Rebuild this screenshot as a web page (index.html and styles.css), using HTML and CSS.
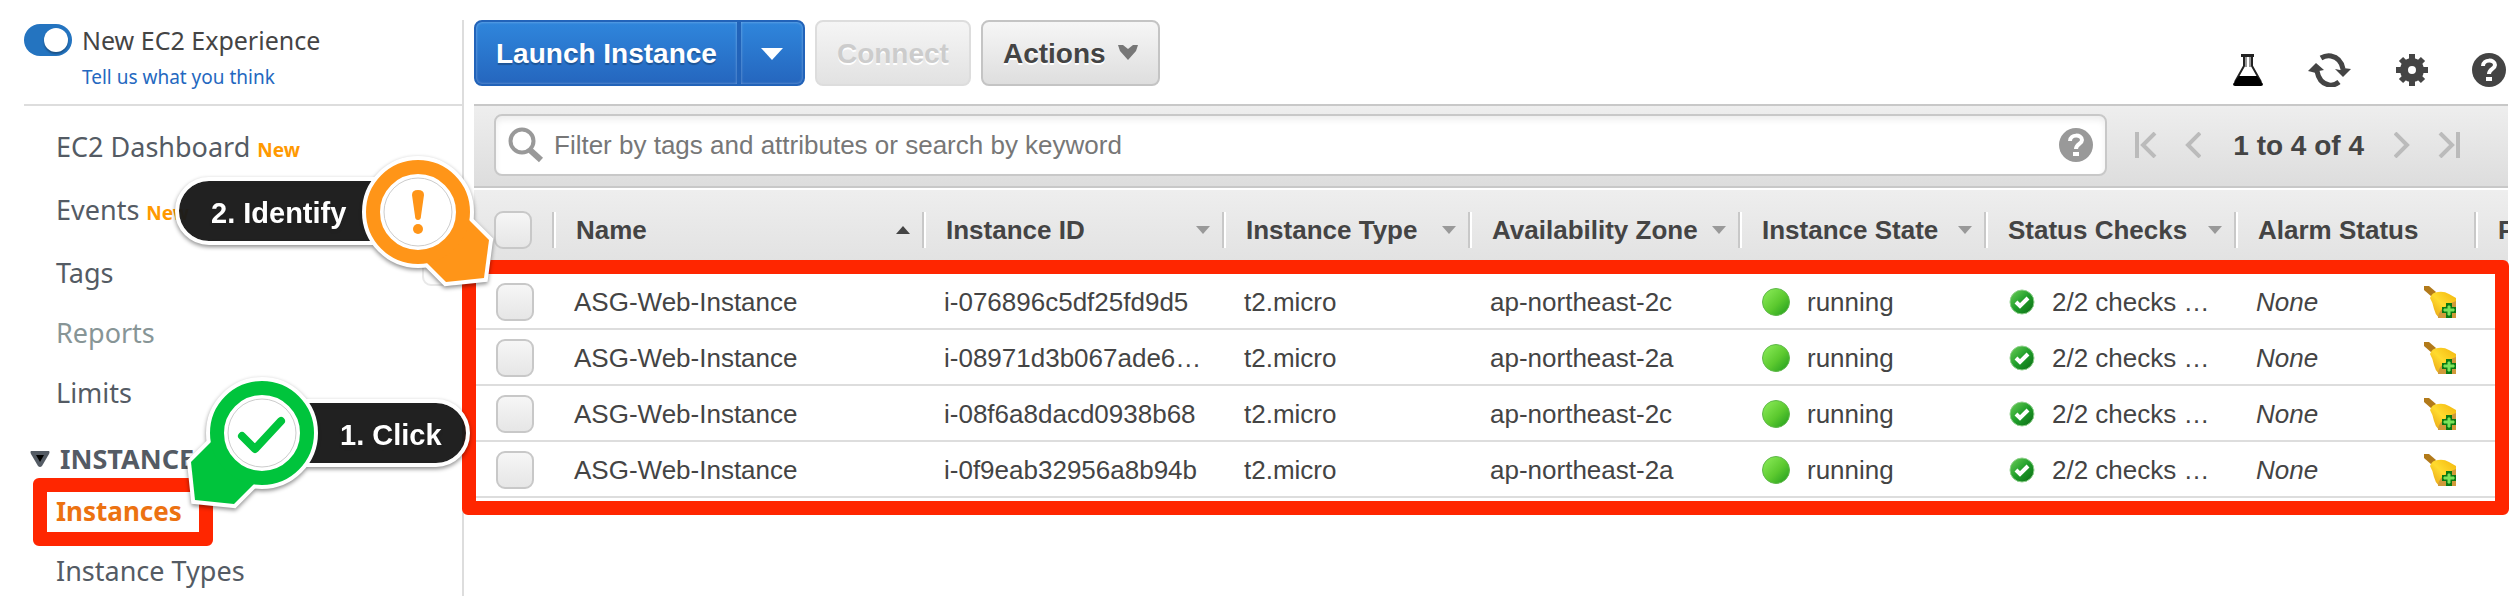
FILE: index.html
```html
<!DOCTYPE html>
<html lang="en">
<head>
<meta charset="utf-8">
<title>EC2 Instances</title>
<link rel="stylesheet" href="styles.css">
</head>
<body>
<svg class="defs" aria-hidden="true">
  <defs>
    <linearGradient id="g-run" x1="0" y1="0" x2="1" y2="1"><stop offset="0" stop-color="#8fef5c"/><stop offset=".55" stop-color="#5cc92f"/><stop offset="1" stop-color="#1c9a1c"/></linearGradient>
    <linearGradient id="g-ok" x1="0" y1="0" x2="1" y2="1"><stop offset="0" stop-color="#6fd05a"/><stop offset=".5" stop-color="#1f9e2a"/><stop offset="1" stop-color="#0b6a14"/></linearGradient>
    <linearGradient id="g-bell" x1="0" y1="1" x2="1" y2="0"><stop offset="0" stop-color="#e59a10"/><stop offset=".5" stop-color="#ffdb2e"/><stop offset="1" stop-color="#f2b50c"/></linearGradient>
  </defs>
  <symbol id="i-run" viewBox="0 0 28 28"><circle cx="14" cy="14" r="13.5" fill="url(#g-run)" stroke="#5fb84a"/></symbol>
  <symbol id="i-ok" viewBox="0 0 26 26"><circle cx="13" cy="13" r="12" fill="url(#g-ok)" stroke="#8fd08c" stroke-width="1"/><path d="M7 13l4 4 8-8" fill="none" stroke="#fff" stroke-width="4"/></symbol>
  <symbol id="i-bell" viewBox="0 0 32 32"><path d="M0 0h5l7 6-4 5-8-7z" fill="#b27a1a"/><path d="M6 12q2-6 8-6 6-1 11 2l7 4v10L20 32h-5q-4-4-5-9-1-6-4-11z" fill="url(#g-bell)"/><path d="M14 32q0-10 18-17v17z" fill="#d09a3a"/><path d="M22 17h6v4h4v6h-4v5h-6v-5h-4v-6h4z" fill="#0a7a12"/><path d="M24 20h2v3h4v2h-4v4h-2v-4h-4v-2h4z" fill="#7be35a" stroke="#7be35a"/></symbol>
  <symbol id="i-help" viewBox="0 0 34 34"><circle cx="17" cy="17" r="17" fill="currentColor"/><path d="M11 13c0-7 12-7 12-1 0 4-6 4-6 9" fill="none" stroke="#fff" stroke-width="4"/><path d="M14 24h6v4h-6z" fill="#fff"/></symbol>
</svg>

<div class="app">
  <aside class="sidebar">
    <div class="experience">
      <input class="switch" type="checkbox" id="exp" checked>
      <label for="exp">New EC2 Experience</label>
      <a class="feedback" href="#">Tell us what you think</a>
    </div>
    <nav class="nav">
      <a href="#">EC2 Dashboard <b>New</b></a>
      <a href="#">Events <b>New</b></a>
      <a href="#">Tags</a>
      <a href="#" class="muted">Reports</a>
      <a href="#">Limits</a>
      <h2><svg viewBox="0 0 20 16"><path d="M1 0h18q1 1 0 3l-7 12q-2 2-4 0l-7-12q-1-2 0-3z" fill="#545b64"/><path d="M6 4h8l-4 7z" fill="#000"/></svg>INSTANCES</h2>
      <a href="#" class="current">Instances</a>
      <a href="#">Instance Types</a>
    </nav>
    <div class="frame frame-nav"></div>
  </aside>

  <main class="main">
    <div class="toolbar">
      <div class="split">
        <button class="btn primary">Launch Instance</button>
        <button class="btn primary more" aria-label="More launch options"><svg width="22" height="12" viewBox="0 0 22 12"><path d="M0 0h22l-11 12z" fill="#fff"/></svg></button>
      </div>
      <button class="btn" disabled>Connect</button>
      <button class="btn">Actions <svg width="20" height="18" viewBox="0 0 20 18"><path d="M0 0h5l5 4 5-4h5l-2 6-8 9-8-9z" fill="#777"/></svg></button>
      <div class="tools">
        <button class="icon" aria-label="Labs"><svg width="32" height="34" viewBox="0 0 32 34"><path d="M12 4v9L3 29M20 4v9l9 16" fill="none" stroke="#222" stroke-width="2"/><path d="M14 4v10M18 4v10" stroke="#999" stroke-width="2"/><path d="M9 1h13v3H9z" fill="#222"/><path d="M7 23h18l6 8q0 2-2 2H3q-2 0-2-2z" fill="#000"/></svg></button>
        <button class="icon" aria-label="Refresh"><svg width="44" height="34" viewBox="0 0 44 34"><path d="M13 5q5-3 10-2 10 2 12 13M31 29q-5 4-10 3Q11 30 9 18" fill="none" stroke="#444" stroke-width="5"/><path d="M27 16l5 1 3-2 8 1-8 8zM0 18l8-8 8 7-5 1-3 2z" fill="#444"/></svg></button>
        <button class="icon" aria-label="Settings"><svg width="32" height="32" viewBox="0 0 32 32"><circle cx="16" cy="16" r="8" fill="none" stroke="#444" stroke-width="8"/><path d="M16 0v9M16 23v9M0 16h9M23 16h9M5 5l5 5M22 22l5 5M27 5l-5 5M10 22l-5 5" stroke="#444" stroke-width="6"/></svg></button>
        <button class="icon dark" aria-label="Help"><svg width="34" height="34"><use href="#i-help"/></svg></button>
      </div>
    </div>

    <div class="filterbar">
      <div class="search">
        <svg width="36" height="36" viewBox="0 0 36 36"><circle cx="14" cy="14" r="11.500" fill="none" stroke="#999" stroke-width="4"/><path d="M22 23l11 10" stroke="#999" stroke-width="6"/></svg>
        <input type="text" aria-label="Filter" placeholder="Filter by tags and attributes or search by keyword">
        <button class="icon" aria-label="Filter help"><svg width="34" height="34"><use href="#i-help"/></svg></button>
      </div>
      <div class="pager">
        <button class="icon" aria-label="First page"><svg width="22" height="26" viewBox="0 0 22 26"><path d="M2 0v26M20 1L8 13l12 12"/></svg></button>
        <button class="icon" aria-label="Previous page"><svg width="16" height="26" viewBox="0 0 16 26"><path d="M15 1L3 13l12 12"/></svg></button>
        <span>1 to 4 of 4</span>
        <button class="icon" aria-label="Next page"><svg width="16" height="26" viewBox="0 0 16 26"><path d="M1 1l12 12L1 25"/></svg></button>
        <button class="icon" aria-label="Last page"><svg width="22" height="26" viewBox="0 0 22 26"><path d="M20 0v26M2 1l12 12L2 25"/></svg></button>
      </div>
    </div>

    <div class="grid">
      <table>
        <colgroup><col class="c-check"><col class="c-name"><col class="c-id"><col class="c-type"><col class="c-zone"><col class="c-type"><col class="c-status"><col class="c-alarm"><col></colgroup>
        <thead>
          <tr>
            <th><input type="checkbox" aria-label="Select all"></th>
            <th><div class="asc">Name</div></th>
            <th><div class="sort">Instance ID</div></th>
            <th><div class="sort">Instance Type</div></th>
            <th><div class="sort">Availability Zone</div></th>
            <th><div class="sort">Instance State</div></th>
            <th><div class="sort">Status Checks</div></th>
            <th><div>Alarm Status</div></th>
            <th><div>P</div></th>
          </tr>
        </thead>
        <tbody>
          <tr><td><input type="checkbox" aria-label="Select row 1"></td><td>ASG-Web-Instance</td><td>i-076896c5df25fd9d5</td><td>t2.micro</td><td>ap-northeast-2c</td><td><div class="state"><svg width="28" height="28"><use href="#i-run"/></svg>running</div></td><td><div class="state check"><svg width="26" height="26"><use href="#i-ok"/></svg>2/2 checks …</div></td><td><div class="alarm"><i>None</i><svg width="32" height="32"><use href="#i-bell"/></svg></div></td><td></td></tr>
          <tr><td><input type="checkbox" aria-label="Select row 2"></td><td>ASG-Web-Instance</td><td>i-08971d3b067ade6…</td><td>t2.micro</td><td>ap-northeast-2a</td><td><div class="state"><svg width="28" height="28"><use href="#i-run"/></svg>running</div></td><td><div class="state check"><svg width="26" height="26"><use href="#i-ok"/></svg>2/2 checks …</div></td><td><div class="alarm"><i>None</i><svg width="32" height="32"><use href="#i-bell"/></svg></div></td><td></td></tr>
          <tr><td><input type="checkbox" aria-label="Select row 3"></td><td>ASG-Web-Instance</td><td>i-08f6a8dacd0938b68</td><td>t2.micro</td><td>ap-northeast-2c</td><td><div class="state"><svg width="28" height="28"><use href="#i-run"/></svg>running</div></td><td><div class="state check"><svg width="26" height="26"><use href="#i-ok"/></svg>2/2 checks …</div></td><td><div class="alarm"><i>None</i><svg width="32" height="32"><use href="#i-bell"/></svg></div></td><td></td></tr>
          <tr><td><input type="checkbox" aria-label="Select row 4"></td><td>ASG-Web-Instance</td><td>i-0f9eab32956a8b94b</td><td>t2.micro</td><td>ap-northeast-2a</td><td><div class="state"><svg width="28" height="28"><use href="#i-run"/></svg>running</div></td><td><div class="state check"><svg width="26" height="26"><use href="#i-ok"/></svg>2/2 checks …</div></td><td><div class="alarm"><i>None</i><svg width="32" height="32"><use href="#i-bell"/></svg></div></td><td></td></tr>
        </tbody>
      </table>
      <div class="frame frame-rows"></div>
    </div>
  </main>

  <div class="ghost"></div>
  <div class="callout identify">
    <span>2. Identify</span>
    <svg width="140" height="140" viewBox="0 0 140 140">
      <path d="M111 68l20 20-5 38-38 4-22-22" fill="#ff9518" stroke="#fff" stroke-width="8"/>
      <circle cx="60" cy="60" r="45" fill="#fff" stroke="#fff" stroke-width="22"/>
      <path d="M111 68l20 20-5 38-38 4-22-22z" fill="#ff9518"/>
      <circle cx="60" cy="60" r="45" fill="#fff" stroke="#ff9518" stroke-width="14"/>
      <circle cx="60" cy="60" r="34" fill="none" stroke="#ccc"/>
      <path d="M54 43q0-5 6-5t6 5l-3 21q0 4-3 4t-3-4z" fill="#ff9518"/><circle cx="60" cy="77" r="5" fill="#ff9518"/>
    </svg>
  </div>
  <div class="callout click">
    <span>1. Click</span>
    <svg width="140" height="140" viewBox="0 0 140 140">
      <path d="M29 69L9 89l4 38 39 4 22-22" fill="#00c43c" stroke="#fff" stroke-width="8"/>
      <circle cx="80" cy="60" r="45" fill="#fff" stroke="#fff" stroke-width="22"/>
      <path d="M29 69L9 89l4 38 39 4 22-22z" fill="#00c43c"/>
      <circle cx="80" cy="60" r="45" fill="#fff" stroke="#00c43c" stroke-width="14"/>
      <circle cx="80" cy="60" r="34" fill="none" stroke="#ccc"/>
      <path d="M60 63l13 13 26-28" fill="none" stroke="#00c43c" stroke-width="8" stroke-linecap="round" stroke-linejoin="round"/>
    </svg>
  </div>
</div>
</body>
</html>
```
FILE: styles.css
```css
* { box-sizing: border-box; }
body { margin: 0; background: #fff; color: #444; font: 26px/32px "Liberation Sans", Arial, sans-serif; }
svg { display: block; flex: none; }
a { text-decoration: none; }
button, input { font: inherit; color: inherit; margin: 0; }
.defs { position: absolute; width: 0; height: 0; }
.app { position: relative; display: flex; min-height: 100vh; padding: 20px 12px 0 24px; overflow: hidden; }

.sidebar { position: relative; flex: none; width: 440px; border-right: 2px solid #ddd; font-family: "Noto Sans", "Open Sans", sans-serif; }
.experience { display: grid; grid-template-columns: 48px 1fr; column-gap: 10px; align-items: center; align-content: start; row-gap: 5px; height: 86px; padding-top: 4px; border-bottom: 2px solid #ddd; font-size: 25px; }
.switch { appearance: none; display: flex; width: 48px; height: 32px; padding: 4px; border-radius: 16px; background: #2474c0; justify-content: flex-end; }
.switch::before { content: ""; width: 24px; height: 24px; border-radius: 50%; background: #fff; box-shadow: 0 2px 2px rgba(0,0,0,.3); }
.feedback { grid-column: 2; color: #2468c0; font-size: 19px; }
.nav { display: flex; flex-direction: column; padding: 21px 0 0 32px; font-size: 27px; line-height: 40px; gap: 20px; }
.nav a { color: #545b64; }
.nav b { color: #f90; font-size: 19px; }
.nav .muted { color: #879596; }
.nav .current { color: #ec7211; font-size: 26px; font-weight: 700; }
.nav h2 { display: flex; align-items: center; gap: 10px; margin: 6px 0 -8px -26px; font-size: 27px; line-height: 40px; color: #545b64; }
.nav h2 svg { width: 20px; height: 16px; }

.frame { position: absolute; border: 14px solid #ff2600; border-radius: 6px; pointer-events: none; }
.frame-nav { left: 9px; top: 458px; width: 180px; height: 68px; }
.frame-rows { left: -12px; right: -1px; top: 70px; bottom: -17px; }

.main { flex: 1; min-width: 0; padding-left: 10px; }
.toolbar { display: flex; align-items: flex-start; gap: 10px; height: 84px; }
.split { display: flex; }
.btn { display: flex; align-items: center; gap: 12px; height: 66px; padding: 2px 20px 0; border: 2px solid #c4c4c4; border-radius: 8px; background: linear-gradient(#f6f6f6, #dedede); font-size: 28px; font-weight: 700; text-shadow: 0 2px 0 #fff; }
.btn:disabled { border-color: #ddd; color: #ccc; background: linear-gradient(#f5f5f5, #e2e2e2); }
.btn.primary { border-color: #2263b9; border-radius: 8px 0 0 8px; background: linear-gradient(#2f86dc, #2566be); box-shadow: inset 0 0 3px rgba(255,255,255,.4); color: #fff; text-shadow: 0 2px 1px rgba(0,0,0,.25); }
.btn.more { border-radius: 0 8px 8px 0; }
.tools { display: flex; align-items: center; gap: 44px; margin-left: auto; padding: 33px 2px 0 0; }
.icon { display: block; padding: 0; border: 0; background: none; color: #999; }
.icon.dark { color: #444; }

.filterbar { display: flex; align-items: flex-start; gap: 28px; height: 84px; padding: 8px 48px 0 20px; border: solid #c8c8c8; border-width: 2px 0; background: linear-gradient(#eee, #ddd); }
.search { flex: 1; display: flex; align-items: center; height: 62px; padding: 0 12px; border: 2px solid #c8c8c8; border-radius: 8px; background: #fff; box-shadow: inset 0 4px 6px #eee; }
.search input { flex: 1; padding: 0 10px; border: 0; outline: 0; background: none; }
.search input::placeholder { color: #777; opacity: 1; }
.pager { display: flex; align-items: center; height: 62px; font-size: 28px; font-weight: 700; gap: 28px; }
.pager svg { fill: none; stroke: #bbb; stroke-width: 4px; }
.pager span { padding: 2px 2px 0 4px; }

.grid { position: relative; border-top: 2px solid #fff; }
table { width: 100%; table-layout: fixed; border-collapse: separate; border-spacing: 0; }
.c-check { width: 78px; } .c-name { width: 370px; } .c-id { width: 300px; } .c-type { width: 246px; } .c-zone { width: 270px; } .c-status { width: 250px; } .c-alarm { width: 240px; }
thead tr { background: linear-gradient(#eee, #e0e0e0); }
th { height: 84px; padding: 0 0 4px; text-align: left; overflow: hidden; }
th div { display: flex; align-items: center; justify-content: space-between; height: 36px; padding: 0 12px 0 22px; border-left: 2px solid #c8c8c8; box-shadow: inset 2px 0 0 #fff; white-space: nowrap; }
th .sort::after, th .asc::after { content: ""; border: solid transparent; border-width: 8px 7px 0; border-top-color: #999; }
th .asc::after { border-width: 0 7px 8px; border-bottom-color: #444; }
td { height: 56px; padding: 2px 0 0 22px; border-bottom: 2px solid #ddd; white-space: nowrap; }
th input, td input { appearance: none; display: block; width: 38px; height: 38px; border: 2px solid #c8c8c8; border-radius: 9px; background: linear-gradient(#f6f6f6, #e6e6e6); }
th input { margin-left: 20px; }
.state { display: flex; align-items: center; gap: 17px; padding-left: 2px; }
.state.check { padding-left: 3px; }
.alarm { display: flex; align-items: center; justify-content: space-between; padding-right: 18px; }

.ghost { position: absolute; left: 422px; top: 248px; width: 38px; height: 38px; border: 2px solid #e8e8e8; border-radius: 9px; background: #fdfdfd; }
.callout { position: absolute; display: flex; align-items: flex-start; filter: drop-shadow(0 2px 2px rgba(0,0,0,.45)); }
.callout span { height: 68px; border: 4px solid #fff; background: rgba(26,26,26,.95); background-clip: padding-box; color: #fff; font-size: 29px; font-weight: 700; line-height: 64px; }
.identify { left: 175px; top: 152px; }
.identify span { width: 212px; margin-top: 25px; padding-left: 32px; border-radius: 34px 0 0 34px; }
.identify svg { margin-left: -29px; }
.click { left: 182px; top: 373px; flex-direction: row-reverse; }
.click span { width: 168px; margin: 26px 0 0 -20px; padding-left: 34px; border-radius: 0 34px 34px 0; }
.click svg { position: relative; z-index: 1; }
```
